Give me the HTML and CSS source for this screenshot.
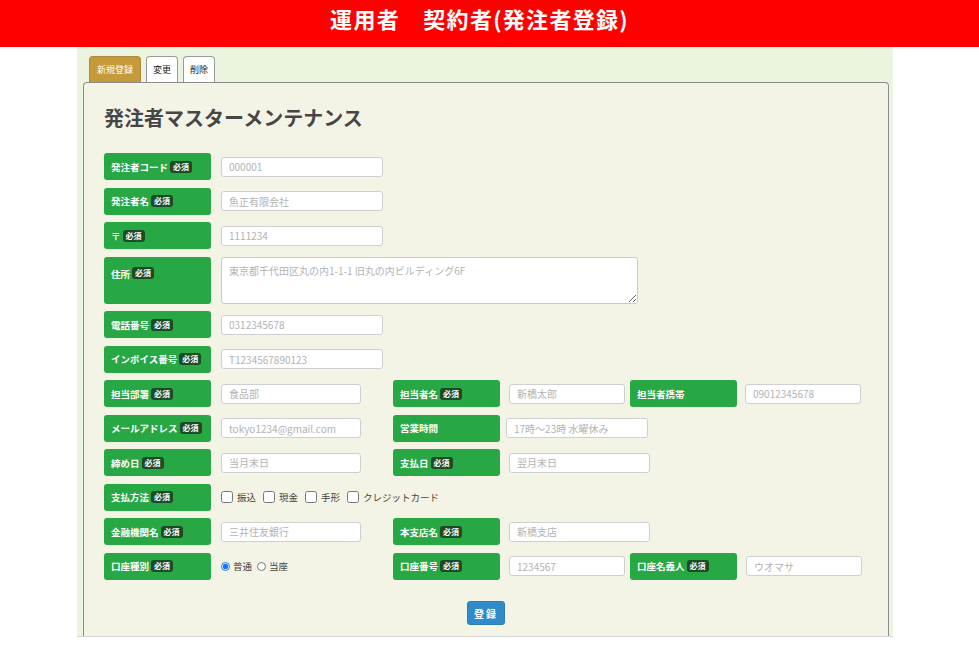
FILE: index.html
```html
<html>

<head>
  <title>発注者マスターメンテナンス</title>
  <link rel="stylesheet" href="styles.css">
</head>

<body>
  <div class="topbar">運用者　契約者(発注者登録)</div>

  <div class="wrap">
    <div class="tabs">
      <span class="tab tab-on">新規登録</span>
      <span class="tab">変更</span>
      <span class="tab">削除</span>
    </div>

    <div class="panel">
      <h2 class="ttl">発注者マスターメンテナンス</h2>

      <form class="form">
        <div class="row">
          <label class="lbl">発注者コード<span class="req">必須</span></label>
          <input class="inp w-l" type="text" placeholder="000001">
        </div>
        <div class="row">
          <label class="lbl">発注者名<span class="req">必須</span></label>
          <input class="inp w-l" type="text" placeholder="魚正有限会社">
        </div>
        <div class="row">
          <label class="lbl">〒<span class="req">必須</span></label>
          <input class="inp w-l" type="text" placeholder="1111234">
        </div>
        <div class="row row-tall">
          <label class="lbl lbl-top">住所<span class="req">必須</span></label>
          <textarea class="area" placeholder="東京都千代田区丸の内1-1-1 旧丸の内ビルディング6F"></textarea>
        </div>
        <div class="row">
          <label class="lbl">電話番号<span class="req">必須</span></label>
          <input class="inp w-l" type="text" placeholder="0312345678">
        </div>
        <div class="row">
          <label class="lbl">インボイス番号<span class="req">必須</span></label>
          <input class="inp w-l" type="text" placeholder="T1234567890123">
        </div>

        <div class="row">
          <div class="cell">
            <label class="lbl">担当部署<span class="req">必須</span></label>
            <input class="inp w-m" type="text" placeholder="食品部">
          </div>
          <label class="lbl">担当者名<span class="req">必須</span></label>
          <input class="inp w-s" type="text" placeholder="新橋太郎">
          <label class="lbl lbl-3">担当者携帯</label>
          <input class="inp w-s ml8" type="text" placeholder="09012345678">
        </div>
        <div class="row">
          <div class="cell">
            <label class="lbl">メールアドレス<span class="req">必須</span></label>
            <input class="inp w-m" type="text" placeholder="tokyo1234@gmail.com">
          </div>
          <label class="lbl">営業時間</label>
          <input class="inp w-m2 ml6" type="text" placeholder="17時～23時 水曜休み">
        </div>
        <div class="row">
          <div class="cell">
            <label class="lbl">締め日<span class="req">必須</span></label>
            <input class="inp w-m" type="text" placeholder="当月末日">
          </div>
          <label class="lbl">支払日<span class="req">必須</span></label>
          <input class="inp w-m2" type="text" placeholder="翌月末日">
        </div>
        <div class="row">
          <label class="lbl">支払方法<span class="req">必須</span></label>
          <div class="checks">
            <label class="chk"><input type="checkbox">振込</label>
            <label class="chk"><input type="checkbox">現金</label>
            <label class="chk"><input type="checkbox">手形</label>
            <label class="chk"><input type="checkbox">クレジットカード</label>
          </div>
        </div>
        <div class="row">
          <div class="cell">
            <label class="lbl">金融機関名<span class="req">必須</span></label>
            <input class="inp w-m" type="text" placeholder="三井住友銀行">
          </div>
          <label class="lbl">本支店名<span class="req">必須</span></label>
          <input class="inp w-m2" type="text" placeholder="新橋支店">
        </div>
        <div class="row">
          <div class="cell">
            <label class="lbl">口座種別<span class="req">必須</span></label>
            <div class="radios">
              <label class="rad"><input type="radio" name="kind" checked>普通</label>
              <label class="rad"><input type="radio" name="kind">当座</label>
            </div>
          </div>
          <label class="lbl">口座番号<span class="req">必須</span></label>
          <input class="inp w-s" type="text" placeholder="1234567">
          <label class="lbl lbl-3">口座名義人<span class="req">必須</span></label>
          <input class="inp w-s" type="text" placeholder="ウオマサ">
        </div>

        <div class="btns">
          <button class="btn" type="button">登録</button>
        </div>
      </form>
    </div>
  </div>
</body>

</html>
```

FILE: styles.css
```css
    body {
      margin: 0;
      font-family: "Noto Sans CJK JP", "Liberation Sans", sans-serif;
      background: #fff;
    }

    .topbar {
      height: 47px;
      line-height: 36px;
      padding-right: 20px;
      background: #ff0000;
      color: #fff;
      font-size: 22px;
      font-weight: bold;
      letter-spacing: 1.3px;
      text-align: center;
    }

    .wrap {
      width: 816px;
      margin-left: 77px;
      padding: 9px 4px 0 6px;
      box-sizing: border-box;
      background: #ebf4df;
      border-bottom: 1px solid #d6d6d6;
    }

    /* tabs */
    .tabs {
      display: flex;
      gap: 5px;
      padding-left: 6px;
    }

    .tab {
      height: 25px;
      line-height: 26px;
      padding: 0 6px;
      border: 1px solid #9a9a9a;
      border-bottom: none;
      border-radius: 4px 4px 0 0;
      background: #fff;
      color: #222;
      font-size: 9px;
    }

    .tab-on {
      padding: 0 7px;
      background: #c49a3b;
      border-color: #b08a3a;
      color: #fff;
    }

    .panel {
      height: 554px;
      padding: 23px 0 0 20px;
      border: 1px solid #8c8c8c;
      border-bottom: none;
      border-radius: 4px 4px 0 0;
      background: #f4f4e6;
      box-sizing: border-box;
    }

    .ttl {
      margin: 0 0 23px 0;
      font-size: 20px;
      line-height: 24px;
      color: #464646;
    }

    /* form rows */
    .form {
      display: flex;
      flex-direction: column;
      gap: 7.5px;
      margin: 0;
    }

    .row {
      display: flex;
      align-items: center;
      height: 27px;
    }

    .row-tall {
      height: 47px;
      align-items: stretch;
    }

    .cell {
      display: flex;
      align-items: center;
      width: 289px;
    }

    .lbl {
      display: flex;
      align-items: center;
      gap: 2px;
      width: 107px;
      height: 27px;
      padding-left: 7px;
      box-sizing: border-box;
      border-radius: 3px;
      background: #28a745;
      color: #fff;
      font-size: 9.5px;
      font-weight: bold;
      flex-shrink: 0;
    }

    .lbl-top {
      height: 47px;
      align-items: flex-start;
      padding-top: 10px;
    }

    .lbl-3 {
      margin-left: 5px;
    }

    .req {
      padding: 0 3px;
      line-height: 12px;
      border-radius: 3px;
      background: #1c4a27;
      color: #fff;
      font-size: 8px;
    }

    .inp {
      height: 20px;
      margin-left: 10px;
      padding: 0 7px;
      box-sizing: border-box;
      border: 1px solid #cfcfcf;
      border-radius: 3px;
      background: #fff;
      font-family: inherit;
      font-size: 10px;
      outline: none;
    }

    .inp::placeholder,
    .area::placeholder {
      color: #b3b3b3;
    }

    .w-l { width: 162px; }
    .w-m { width: 140px; }
    .w-m2 { width: 141px; margin-left: 9px; }
    .w-s { width: 116px; margin-left: 9px; }
    .ml8 { margin-left: 8px; }
    .ml6 { margin-left: 6px; width: 142px; }

    .area {
      width: 417px;
      height: 47px;
      margin-left: 10px;
      padding: 5px 7px;
      box-sizing: border-box;
      border: 1px solid #b7d0e4;
      border-radius: 3px;
      background: #fff;
      font-family: inherit;
      font-size: 10px;
      resize: both;
    }

    /* checkboxes / radios */
    .checks,
    .radios {
      display: flex;
      align-items: center;
      margin-left: 10px;
      font-size: 9.5px;
      color: #444;
    }

    .chk {
      display: flex;
      align-items: center;
      gap: 4px;
      margin-right: 7px;
    }

    .chk input {
      width: 12px;
      height: 12px;
      margin: 0;
    }

    .rad {
      display: flex;
      align-items: center;
      gap: 3px;
      margin-right: 5px;
    }

    .rad input {
      width: 9px;
      height: 9px;
      margin: 0;
      accent-color: #1a73e8;
    }

    .btns {
      display: flex;
      justify-content: center;
      margin-top: 14px;
      padding-right: 20px;
    }

    .btn {
      width: 38px;
      height: 24px;
      padding: 0;
      border: 1px solid #2a7db5;
      border-radius: 3px;
      background: #2f8bcb;
      color: #fff;
      font-family: inherit;
      font-size: 10px;
      font-weight: bold;
      letter-spacing: 2px;
      cursor: pointer;
    }
    .btn:hover {
      background: #2a7db5;
    }
```
